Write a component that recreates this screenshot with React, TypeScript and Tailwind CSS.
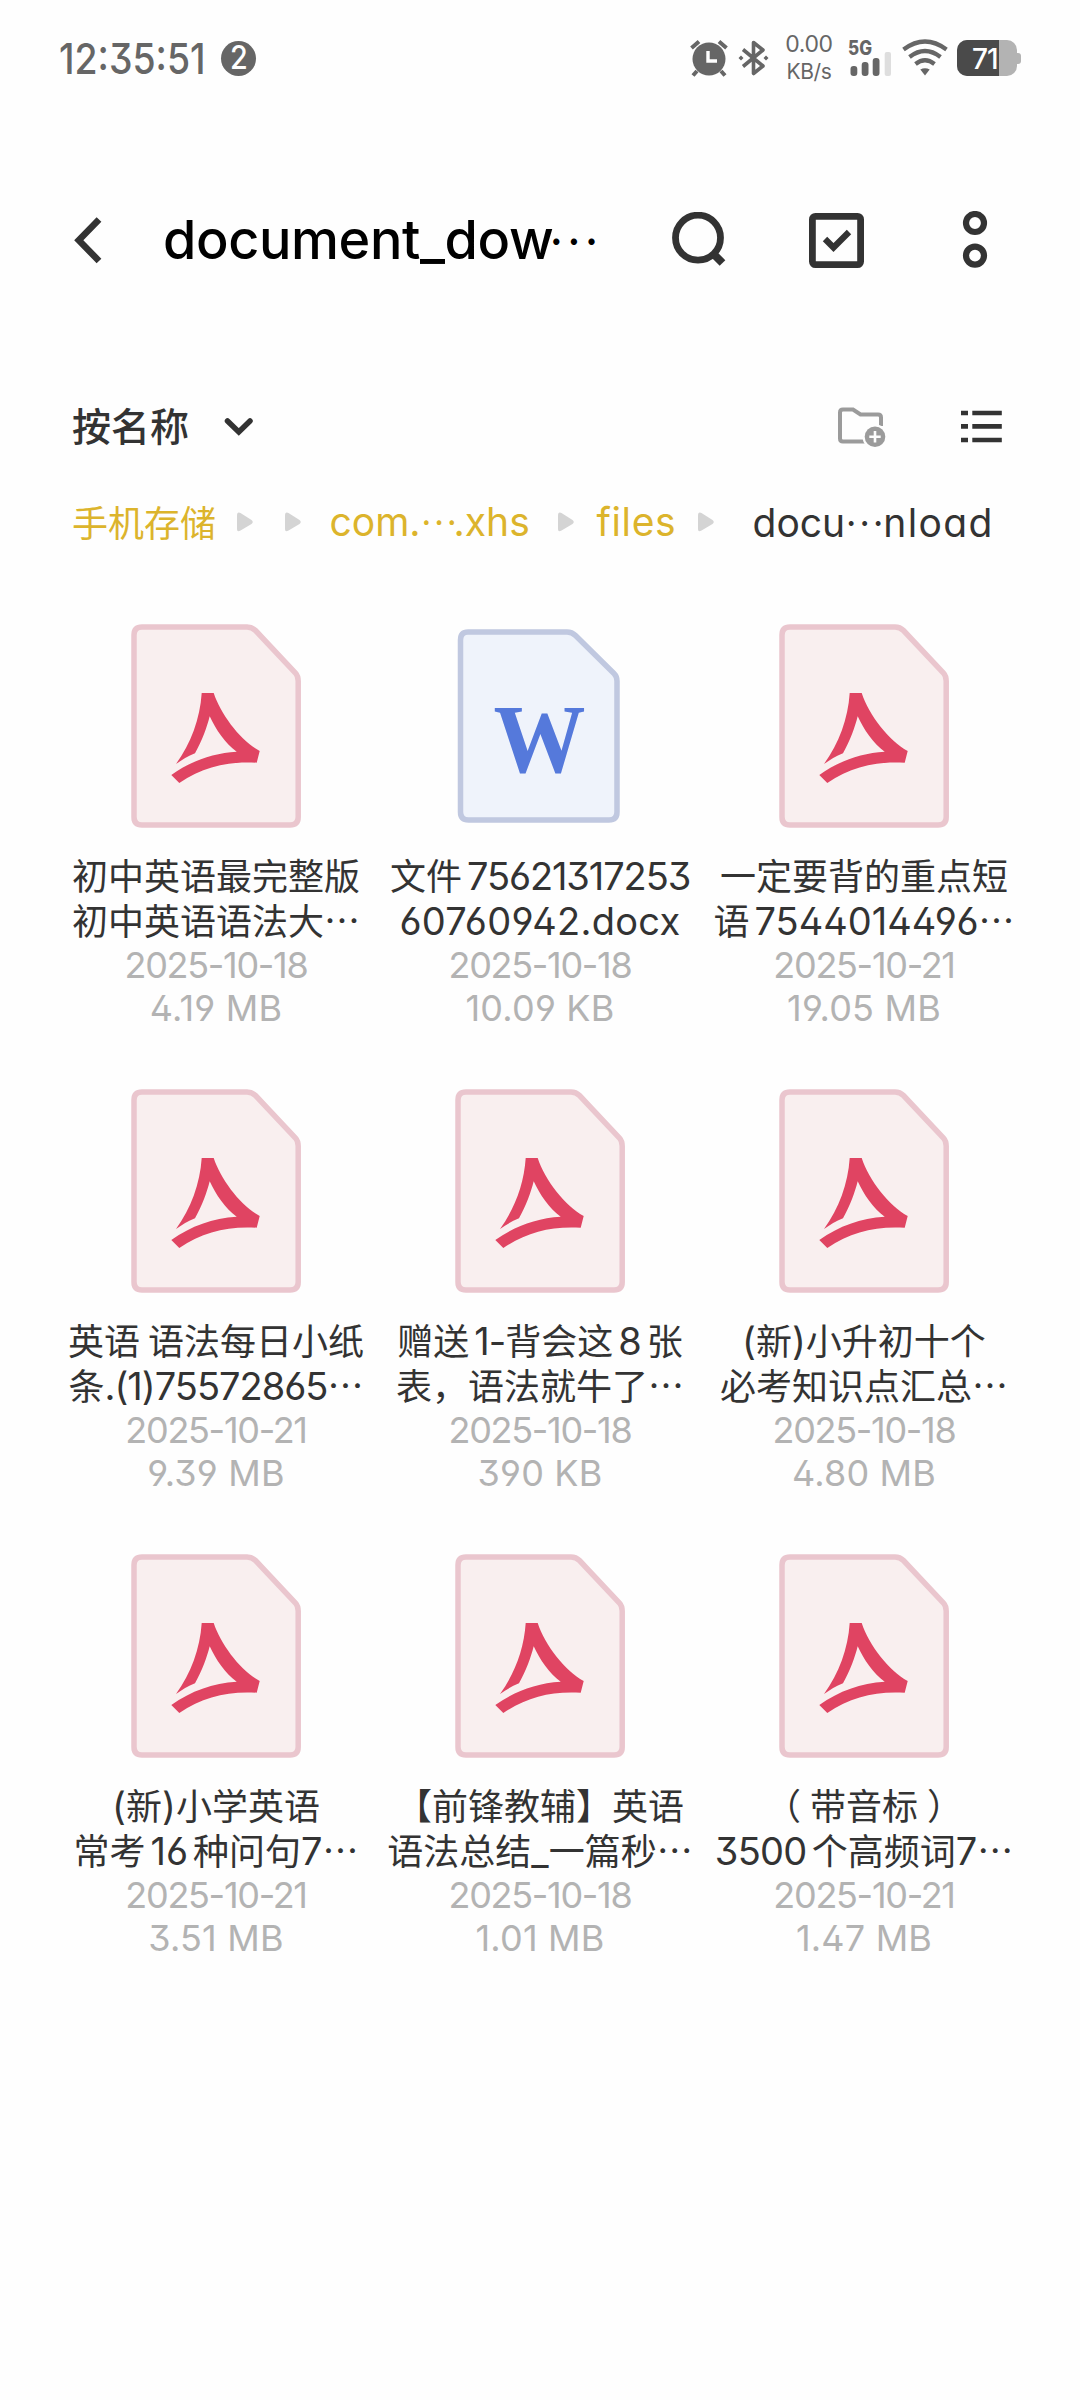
type FileKind = "pdf" | "word";

interface FileItem {
  kind: FileKind;
  lines: [string, string];
  date: string;
  size: string;
}

// "~" marks the thin gap between Chinese characters and digits
const FILES: FileItem[] = [
  { kind: "pdf", lines: ["初中英语最完整版", "初中英语语法大…"], date: "2025-10-18", size: "4.19 MB" },
  { kind: "word", lines: ["文件~75621317253", "60760942.docx"], date: "2025-10-18", size: "10.09 KB" },
  { kind: "pdf", lines: ["一定要背的重点短", "语~7544014496…"], date: "2025-10-21", size: "19.05 MB" },
  { kind: "pdf", lines: ["英语 语法每日小纸", "条.(1)75572865…"], date: "2025-10-21", size: "9.39 MB" },
  { kind: "pdf", lines: ["赠送~1-背会这~8~张", "表，语法就牛了…"], date: "2025-10-18", size: "390 KB" },
  { kind: "pdf", lines: ["(新)小升初十个", "必考知识点汇总…"], date: "2025-10-18", size: "4.80 MB" },
  { kind: "pdf", lines: ["(新)小学英语", "常考~16~种问句7…"], date: "2025-10-21", size: "3.51 MB" },
  { kind: "pdf", lines: ["【前锋教辅】英语", "语法总结_一篇秒…"], date: "2025-10-18", size: "1.01 MB" },
  { kind: "pdf", lines: ["（带音标）", "3500~个高频词7…"], date: "2025-10-21", size: "1.47 MB" },
];

const TRACKING: Record<string, string> = {
  "75621317253": "tracking-[-1.1px]",
  ".(1)75572865": "tracking-[-1px]",
  "3500": "tracking-[-0.7px]",
  "60760942.docx": "tracking-[0.3px]",
  "1-": "tracking-[-1px]",
};

const latin = "font-['Inter','Noto_Sans_CJK_SC',sans-serif] [font-feature-settings:'cv11','cv03','cv04','ss01']";
const cjk = "font-['Noto_Sans_CJK_SC',sans-serif]";

function StatusBar() {
  return (
    <div className="flex h-[116px] items-center pl-[59px] text-[#666]">
      <div className={`${latin} w-[162px] text-[43px] leading-none font-medium whitespace-nowrap`}>
        <span className="inline-block origin-left scale-x-[0.87]">12:35:51</span>
      </div>
      <div className={`${latin} flex size-[35px] items-center justify-center rounded-full bg-[#666] text-[32px] leading-none font-medium text-white`}>
        <span className="scale-x-90">2</span>
      </div>
      <svg className="ml-[434px]" width="38" height="38" viewBox="0 0 38 38" fill="none">
        <circle cx="19" cy="20" r="16.5" fill="#666" />
        <path d="M18 12v10h9" stroke="#fefefe" strokeWidth="3.4" />
        <path d="M1.5 9 9 2.5M36.5 9 29 2.5" stroke="#666" strokeWidth="4" />
        <path d="M7 32l-4 4.500M31 32l4 4.500" stroke="#666" strokeWidth="4" />
      </svg>
      <svg className="ml-[10px]" width="31" height="38" viewBox="0 0 31 38" fill="none" stroke="#666" strokeWidth="3.6">
        <path d="M5 10.500 25 27 15.500 34.500V3.500L25 11 5 27.500" strokeLinejoin="round" />
        <path d="M.5 19l2.500-2.500L5.500 19 3 21.500zM25.500 19l2.500-2.500 2.500 2.500-2.500 2.500z" fill="#666" stroke="none" />
      </svg>
      <div className={`${latin} ml-[15px] flex w-[50px] flex-col items-center text-[23px] leading-[27px] tracking-[-0.4px]`}>
        <span>0.00</span>
        <span className="text-[21px]">KB/s</span>
      </div>
      <svg className="ml-[14px] overflow-visible" width="44" height="38" viewBox="0 0 44 38">
        <text x="0" y="15.500" className="font-['Inter'] text-[19.5px] font-extrabold" textLength="24" lengthAdjust="spacingAndGlyphs" fill="#666">
          5G
        </text>
        <rect x="2.500" y="27" width="6.800" height="10" rx="3" fill="#666" />
        <rect x="13.700" y="23" width="6.800" height="14" rx="3" fill="#666" />
        <rect x="24.700" y="19" width="6.800" height="18" rx="3" fill="#666" />
        <rect x="36.700" y="13" width="6.300" height="24" rx="2" fill="#dedede" />
      </svg>
      <svg className="ml-[9.500px]" width="46" height="38" viewBox="0 0 46 38" fill="none" stroke="#666" strokeWidth="4.200">
        <path d="M1.500 10.500Q23-5.500 44.500 10.500" />
        <path d="M7.500 18Q23 6 38.500 18" />
        <path d="M13.500 25Q23 17.500 32.500 25" />
        <path d="M18.300 30.500Q23 28 27.700 30.500L23 36.500z" fill="#666" stroke="none" />
      </svg>
      <div className={`${latin} relative ml-[9.500px] h-9 w-[60px] overflow-hidden rounded-[10px] bg-[#b3b3b3]`}>
        <div className="h-full w-[42px] bg-[#4a4a4a]" />
        <span className="absolute top-[4px] left-[15px] text-[28px] leading-[30px] font-medium tracking-[-1px] text-white">71</span>
      </div>
      <div className="h-[11px] w-1 rounded-r-[3px] bg-[#b3b3b3]" />
    </div>
  );
}

function Header() {
  return (
    <header className="flex h-[248px] items-center pl-[72px]">
      <svg width="32" height="50" viewBox="0 0 32 50" fill="none">
        <path d="M27 4.500 6.800 25.200 27 46" stroke="#333" strokeWidth="6.600" />
      </svg>
      <h1 className={`${latin} ml-[59px] w-[507px] text-[54px] leading-none whitespace-nowrap text-black`}>
        <span className="font-medium tracking-[-0.4px]">document_dow</span>
        <span className={`${cjk} relative -top-[15px] -left-[5px] text-[47px] leading-none`}>…</span>
      </h1>
      <svg width="58" height="56" viewBox="0 0 58 56" fill="none" stroke="#333">
        <circle cx="28" cy="25.700" r="22.500" strokeWidth="6.800" />
        <path d="m43 41.500 9.500 9.500" strokeWidth="8" />
      </svg>
      <svg className="ml-[81px]" width="55" height="55" viewBox="0 0 55 55" fill="none" stroke="#333">
        <rect x="3.400" y="3.400" width="48.200" height="48.200" rx="3" strokeWidth="6.800" />
        <path d="m16 26 8.500 8.500L40 19" strokeWidth="6.200" />
      </svg>
      <svg className="ml-[97.500px]" width="26" height="58" viewBox="0 0 26 58" fill="none" stroke="#333" strokeWidth="6.200">
        <circle cx="13" cy="12" r="9" />
        <circle cx="13" cy="44.600" r="9" />
      </svg>
    </header>
  );
}

function SortRow() {
  return (
    <div className="flex h-[124px] items-center pl-[72px]">
      <span className={`${cjk} w-[151px] pb-[3px] text-[39px] leading-none font-medium text-[#333]`}>按名称</span>
      <svg width="32" height="24" viewBox="0 0 32 24" fill="none">
        <path d="m4.500 7 11.300 11L27 7" stroke="#333" strokeWidth="5.500" strokeLinecap="round" />
      </svg>
      <svg className="ml-[582px]" width="50" height="42" viewBox="0 0 50 42" fill="none">
        <path d="M28 36.500H6q-3 0-3-3v-26q0-3 3-3h10l7.500 5H41q3 0 3 3V21" stroke="#9b9b9b" strokeWidth="4" />
        <circle cx="38" cy="31.700" r="12.500" fill="#fefefe" />
        <circle cx="38" cy="31.700" r="10.300" fill="#9b9b9b" />
        <path d="M38 26v11.400M32.300 31.700h11.400" stroke="#fefefe" strokeWidth="2.600" />
      </svg>
      <svg className="ml-[74px]" width="42" height="34" viewBox="0 0 42 34" stroke="#333" strokeWidth="4.700">
        <path d="M0 4h7M11.300 4h29.500M0 17.300h7M11.300 17.300h29.500M0 31h7M11.300 31h29.500" />
      </svg>
    </div>
  );
}

function Arrow({ className }: { className?: string }) {
  return (
    <svg className={`shrink-0 ${className ?? ""}`} width="16" height="20" viewBox="0 0 16 20">
      <path d="M0 3.500Q0-.5 3.500 1L14.500 8Q17 10 14.500 12L3.500 18.500Q0 20.500 0 17z" fill="#d4d4d4" />
    </svg>
  );
}

function Breadcrumb() {
  return (
    <nav className={`${latin} flex h-[68px] items-center pl-[72px] text-[39px] leading-[60px] whitespace-nowrap text-[#dcb42c]`}>
      <span className={`${cjk} w-[164.500px] pb-[3px] text-[36px] leading-none`}>手机存储</span>
      <Arrow />
      <Arrow className="ml-8" />
      <div className="ml-[29px] w-[228px]">
        <span>com.</span>
        <span className={`${cjk} relative -top-[11px] -mr-[3px] text-[34px]`}>…</span>
        <span>.xhs</span>
      </div>
      <Arrow />
      <span className="ml-[23px] w-[101px] tracking-[0.6px]">files</span>
      <Arrow />
      <div className="ml-[39px] text-[#333]">
        <span>docu</span>
        <span className={`${cjk} relative -top-[11px] text-[36px]`}>…</span>
        <span className="tracking-[1.4px]">nload</span>
      </div>
    </nav>
  );
}

function FileIcon({ kind }: { kind: FileKind }) {
  if (kind === "word") {
    return (
      <svg width="170" height="204" viewBox="0 0 170 204">
        <path
          d="M13 8H112Q117 8 120.500 11.500L159 49.500Q162 52.500 162 57V188Q162 196 154 196H13.500Q5.500 196 5.500 188V16Q5.500 8 13 8Z"
          fill="#eff3fb"
          stroke="#c0c8e0"
          strokeWidth="5.500"
        />
        <text
          x="38.500"
          y="147.500"
          fill="#5579db"
          textLength="92"
          lengthAdjust="spacingAndGlyphs"
          className="font-['Liberation_Serif'] text-[97px] font-bold"
        >
          W
        </text>
      </svg>
    );
  }
  return (
    <svg width="170" height="204" viewBox="0 0 170 204">
      <path
        d="M11 3H116Q121 3 124.500 6.500L164.500 49Q167.200 52 167.200 57V193Q167.200 201 159 201H11Q3 201 3 193V11Q3 3 11 3Z"
        fill="#f9efef"
        stroke="#eac6ce"
        strokeWidth="5.500"
      />
      <path
        d="M70.700 69H82.700C90 91 110 117 128.700 127L125.700 138.700C96 137 72 143 48.300 159L40.300 151C60 137 82 129 105.700 127.700C94 119 85 106 78.700 92.300C76 103 71 117 64 129.300C57 132 51 136 45 140C60 119 69 95 70.700 69Z"
        fill="#e04462"
      />
    </svg>
  );
}

function NameLine({ text }: { text: string }) {
  const runs = text.match(/~|（|）|[\x21-\x7d]+|[^\x21-\x7e（）]+/g) ?? [];
  return (
    <div className="h-[45.300px] leading-[45.300px] whitespace-pre">
      {runs.map((run, i) => {
        if (run === "~") return <span key={i} className="inline-block w-[5px]" />;
        if (run === "（") return <span key={i} className="relative -left-[9px]">{run}</span>;
        if (run === "）") return <span key={i} className="relative left-[9px]">{run}</span>;
        if (/^[\x21-\x7d]/.test(run)) {
          return (
            <span key={i} className={`${latin} text-[38px] leading-none ${TRACKING[run] ?? ""}`}>
              {run}
            </span>
          );
        }
        return <span key={i}>{run}</span>;
      })}
    </div>
  );
}

function FileCard({ file }: { file: FileItem }) {
  return (
    <div className="flex h-[465px] flex-col items-center">
      <FileIcon kind={file.kind} />
      <div className={`${cjk} mt-[23.500px] flex flex-col items-center text-[36px] text-[#333]`}>
        <NameLine text={file.lines[0]} />
        <NameLine text={file.lines[1]} />
      </div>
      <div className={`${latin} mt-[2px] flex flex-col items-center text-[36px] leading-[43px] text-[#b3b3b3]`}>
        <span className="tracking-[-1.3px]">{file.date}</span>
        <span className="tracking-[0.2px]">{file.size}</span>
      </div>
    </div>
  );
}

export default function App() {
  return (
    <main className="h-[2400px] w-[1080px] overflow-hidden bg-[#fefefe]">
      <StatusBar />
      <Header />
      <SortRow />
      <Breadcrumb />
      <section className="mx-auto mt-[68px] grid w-[972px] grid-cols-3">
        {FILES.map((file) => (
          <FileCard key={file.lines.join("")} file={file} />
        ))}
      </section>
    </main>
  );
}
